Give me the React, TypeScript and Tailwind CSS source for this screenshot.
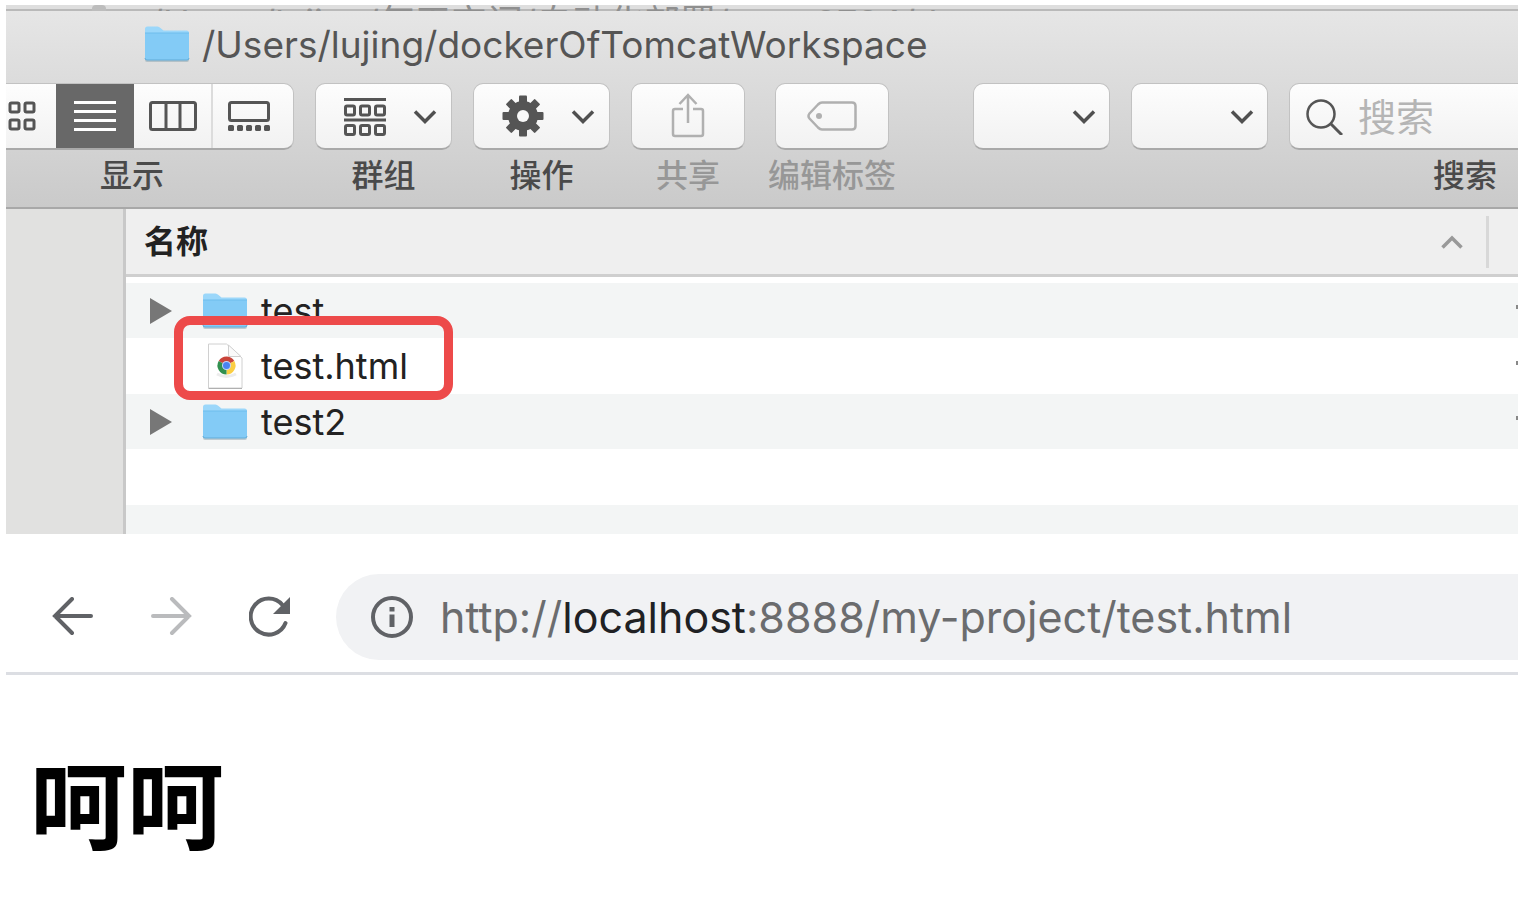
import type { ReactNode } from 'react';

const sans = "font-[Inter,'Noto_Sans_CJK_SC',sans-serif]";

const FolderIcon = () => (
  <svg className="h-[38px] w-[46px] shrink-0" viewBox="0 0 46 38" aria-hidden="true">
    <rect x="1" y="33" width="44" height="4" rx="2" fill="#8aa3b0" opacity=".5" />
    <path d="M1 4q0-2.500 2.500-2.500h10q1.500 0 3 1.500l3 2.500h23q2.500 0 2.500 2.500v5H1z" fill="#9bd7fa" />
    <path d="M1 8h44v25q0 2-2 2H3q-2 0-2-2z" fill="#83cbf6" />
    <path d="M1 8h44" stroke="#6fbdec" strokeWidth="1" />
    <path d="M1 33q0 2 2 2h40q2 0 2-2" fill="none" stroke="#5eabd9" strokeWidth="1" />
  </svg>
);

const ChromeFileIcon = () => (
  <svg className="h-[46px] w-[46px] shrink-0" viewBox="0 0 46 46" aria-hidden="true">
    <path d="M6.500 1h18L40 15v30H6.500z" fill="#fff" stroke="#d0d0d0" />
    <path d="M6.500 45.500H40" stroke="#b0b0b0" />
    <path d="M26.500 2v10q0 1.500 1.500 1.500h11z" fill="#fafafa" stroke="#cfcfcf" />
    <path d="M15 31q9 5 19 0" fill="none" stroke="#ececec" strokeWidth="3" />
    <circle cx="24.500" cy="22.500" r="9" fill="#fff" />
    <path d="M24.500 22.500L16.700 18a9 9 0 0 1 15.600 0z" fill="#c9443a" />
    <path d="M24.500 22.500L32.300 18a9 9 0 0 1-7.800 13.500z" fill="#fbce43" />
    <path d="M24.500 22.500V31.500A9 9 0 0 1 16.700 18z" fill="#31904f" />
    <circle cx="24.500" cy="22.500" r="4.500" fill="#c3d6fa" />
    <circle cx="24.500" cy="22.500" r="3.500" fill="#4a83f0" />
  </svg>
);

const Chevron = () => (
  <svg className="h-[16px] w-[24px]" viewBox="0 0 24 16" fill="none" stroke="#505050" strokeWidth="3.500" aria-hidden="true">
    <path d="M2 3.500l10 10 10-10" />
  </svg>
);

const GridIcon = () => (
  <svg className="h-[32px] w-[28px]" viewBox="0 0 28 32" fill="none" stroke="#555" strokeWidth="3" aria-hidden="true">
    {[2, 17].map((x) =>
      [3, 20].map((y) => <rect key={`${x}-${y}`} x={x} y={y} width="9" height="9" rx="1.500" />)
    )}
  </svg>
);

const ListIcon = () => (
  <svg className="h-[30px] w-[42px]" viewBox="0 0 42 30" stroke="#fff" strokeWidth="3" aria-hidden="true">
    <path d="M0 1.500h42M0 10.500h42M0 19.500h42M0 28.500h42" />
  </svg>
);

const ColumnsIcon = () => (
  <svg className="h-[30px] w-[48px]" viewBox="0 0 48 30" fill="none" stroke="#555" strokeWidth="3" aria-hidden="true">
    <rect x="1.500" y="1.500" width="45" height="27" rx="2" />
    <path d="M17 2v26M31 2v26" />
  </svg>
);

const GalleryIcon = () => (
  <svg className="h-[32px] w-[42px]" viewBox="0 0 42 32" fill="none" stroke="#555" strokeWidth="3" aria-hidden="true">
    <rect x="1.500" y="2.500" width="39" height="18" rx="2" />
    {[0, 9, 18, 27, 36].map((x) => (
      <rect key={x} x={x} y="25" width="6" height="6" rx="1.500" fill="#555" stroke="none" />
    ))}
  </svg>
);

const GroupIcon = () => (
  <svg className="h-[40px] w-[42px]" viewBox="0 0 42 40" fill="none" stroke="#555" strokeWidth="3" aria-hidden="true">
    <path d="M0 3.500h42M0 24h42" />
    {[1.5, 16.5, 31.5].map((x) =>
      [10, 29.5].map((y) => <rect key={`${x}-${y}`} x={x} y={y} width="9" height="9" rx="1.500" />)
    )}
  </svg>
);

const GearIcon = () => (
  <svg className="h-[42px] w-[42px]" viewBox="-21 -21 42 42" fill="#555" aria-hidden="true">
    {[0, 45, 90, 135].map((angle) => (
      <rect key={angle} x="-4" y="-20.500" width="8" height="41" rx="1" transform={`rotate(${angle})`} />
    ))}
    <circle r="15" />
    <circle r="6" fill="#f8f8f8" />
  </svg>
);

const ShareIcon = () => (
  <svg className="h-[46px] w-[34px]" viewBox="0 0 34 46" fill="none" stroke="#b0b0b0" strokeWidth="2.500" aria-hidden="true">
    <path d="M12 16H4q-2 0-2 2v23q0 2 2 2h26q2 0 2-2V18q0-2-2-2h-8M17 30V2M8.500 11L17 2l8.500 9" />
  </svg>
);

const TagIcon = () => (
  <svg className="h-[30px] w-[50px]" viewBox="0 0 50 30" fill="none" stroke="#b0b0b0" strokeWidth="2.500" aria-hidden="true">
    <path d="M15 1.500h30q3.500 0 3.500 3.500v20q0 3.500-3.500 3.500H15q-2 0-4-2l-8.500-9q-2-2.500 0-5l8.500-9q2-2 4-2z" />
    <circle cx="12" cy="15" r="3" fill="#b0b0b0" stroke="none" />
  </svg>
);

const buttonBase =
  'flex h-[67px] items-center rounded-[10px] border border-[#c2c2c2] border-b-2 border-b-[#a9a9a9] bg-linear-to-b from-[#fdfdfd] to-[#f2f2f2]';

type ToolProps = { label?: string; muted?: boolean; className?: string; children: ReactNode };

const Tool = ({ label, muted, className = '', children }: ToolProps) => (
  <div className="flex flex-col items-center">
    {children}
    <span
      className={`h-[52px] text-[32px] leading-[52px] font-medium whitespace-nowrap ${muted ? 'text-[#979797]' : 'text-[#4a4a4a]'} ${className}`}
    >
      {label}
    </span>
  </div>
);

const files = [
  { name: 'test', folder: true },
  { name: 'test.html', folder: false },
  { name: 'test2', folder: true },
];

const Finder = () => (
  <section className="relative overflow-hidden">
    {/* Sliver of the window behind */}
    <div className="flex h-[6px] items-start overflow-hidden bg-[linear-gradient(#dedede_4px,#b9b9b9_4px)] pl-[86px]">
      <span className="h-[6px] w-[14px] shrink-0 rounded-t-sm bg-[#bdbdbd]" />
      <span className="ml-[44px] text-[36px] leading-[36px] whitespace-nowrap text-[#8f8f8f]">
        /Users/lujing/每天空间/自动化部署/sou=8784/d
      </span>
    </div>

    <header className="h-[198px] border-b-2 border-[#a8a8a8] bg-linear-to-b from-[#e6e6e6] to-[#cacaca]">
      <h1 className="flex h-[72px] items-start pt-[14px] pl-[138px] text-[37px] leading-[40px] text-[#555]">
        <FolderIcon />
        <span className="ml-[12px] whitespace-nowrap">/Users/lujing/dockerOfTomcatWorkspace</span>
      </h1>

      <div className="flex items-start">
        <Tool label="显示" className="pr-[36px]">
          <div className="flex h-[67px] overflow-hidden rounded-r-[10px] border border-l-0 border-[#c2c2c2] border-b-2 border-b-[#a9a9a9] bg-linear-to-b from-[#fdfdfd] to-[#f2f2f2]">
            <button aria-label="图标" className="flex w-[50px] items-center pl-[2px]"><GridIcon /></button>
            <button aria-label="列表" className="flex w-[78px] items-center justify-center bg-[#686868]"><ListIcon /></button>
            <button aria-label="分栏" className="flex w-[79px] items-center justify-center border-r-2 border-[#dcdcdc]"><ColumnsIcon /></button>
            <button aria-label="画廊" className="flex w-[80px] items-center pl-[15px]"><GalleryIcon /></button>
          </div>
        </Tool>
        <div className="ml-[21px] flex gap-[21px]">
          <Tool label="群组">
            <button aria-label="群组" className={`${buttonBase} w-[137px] justify-between pr-[14px] pl-[28px]`}><GroupIcon /><Chevron /></button>
          </Tool>
          <Tool label="操作">
            <button aria-label="操作" className={`${buttonBase} w-[137px] justify-between pr-[14px] pl-[28px]`}><GearIcon /><Chevron /></button>
          </Tool>
          <Tool label="共享" muted>
            <button aria-label="共享" disabled className={`${buttonBase} w-[114px] justify-center`}><ShareIcon /></button>
          </Tool>
        </div>
        <div className="ml-[23px]">
          <Tool label="编辑标签" muted>
            <button aria-label="编辑标签" disabled className={`${buttonBase} w-[114px] justify-center`}><TagIcon /></button>
          </Tool>
        </div>
        <div className="ml-[77px] flex gap-[21px]">
          <Tool><button aria-label="菜单一" className={`${buttonBase} w-[137px] justify-end pr-[13px]`}><Chevron /></button></Tool>
          <Tool><button aria-label="菜单二" className={`${buttonBase} w-[137px] justify-end pr-[13px]`}><Chevron /></button></Tool>
        </div>
        <div className="ml-[21px] min-w-0 flex-1">
          <div className={`${buttonBase} rounded-r-none border-r-0 pl-[15px]`}>
            <svg className="h-[38px] w-[38px] shrink-0" viewBox="0 0 38 38" fill="none" stroke="#555" strokeWidth="2.500" aria-hidden="true">
              <circle cx="16" cy="17" r="13.500" />
              <path d="M25.500 26.500L37 38" strokeWidth="3" />
            </svg>
            <input
              id="finder-search"
              type="search"
              placeholder="搜索"
              className="ml-[15px] h-[64px] w-full min-w-0 bg-transparent pt-[2px] text-[38px] outline-none placeholder:text-[#b5b5b5]"
            />
          </div>
          <label htmlFor="finder-search" className="block pr-[21px] text-right text-[32px] leading-[52px] font-medium text-[#4a4a4a]">
            搜索
          </label>
        </div>
      </div>
    </header>

    <div className="flex h-[325px] overflow-hidden">
      <aside className="w-[120px] shrink-0 border-r-3 border-[#c8c8c8] bg-[#e1e1e0]" />
      <div className="min-w-0 flex-1">
        <table className="w-full table-fixed border-separate border-spacing-0 text-[36px] text-[#222]">
          <thead>
            <tr className="h-[68px] bg-[#efefef]">
              <th className="border-b-3 border-[#cfcfcf] p-0 text-left">
                <div className="flex items-center justify-between border-r-3 border-[#d8d8d8] pr-[23px] pl-[18px]">
                  <span className="text-[32px] leading-[52px] font-bold">名称</span>
                  <svg className="h-[14px] w-[22px]" viewBox="0 0 22 14" fill="none" stroke="#999" strokeWidth="3.500" aria-hidden="true">
                    <path d="M1.500 12.500L11 3l9.500 9.500" />
                  </svg>
                </div>
              </th>
              <th className="w-[29px] border-b-3 border-[#cfcfcf] p-0" />
            </tr>
            <tr className="h-[6px]"><td colSpan={2} className="p-0" /></tr>
          </thead>
          <tbody>
            {files.map((file) => (
              <tr key={file.name} className="h-[55px] odd:bg-[#f3f5f5] even:h-[56px]">
                <td className="p-0">
                  <div className="flex items-center pl-[24px]">
                    <svg className="h-[26px] w-[22px] shrink-0" viewBox="0 0 22 26" fill="#777" aria-hidden="true">
                      {file.folder && <path d="M0 0l22 13L0 26z" />}
                    </svg>
                    <span className="ml-[30px]">{file.folder ? <FolderIcon /> : <ChromeFileIcon />}</span>
                    <span className="ml-[13px] leading-[54px]">{file.name}</span>
                  </div>
                </td>
                <td className="p-0">
                  <span className="mb-[7px] ml-auto block h-[4px] w-[2px] bg-[#888]" />
                </td>
              </tr>
            ))}
            <tr className="h-[56px]"><td /><td /></tr>
            <tr className="h-[55px] bg-[#f3f5f5]"><td /><td /></tr>
          </tbody>
        </table>
      </div>
    </div>

    {/* Callout drawn over the file row */}
    <div className="pointer-events-none absolute top-[311px] left-[168px] h-[84px] w-[279px] rounded-[16px] border-9 border-[#ed4a4a]" />
  </section>
);

const Browser = () => (
  <section>
    <nav className="mt-[40px] flex h-[86px] items-center text-[#5f6368]">
      <button aria-label="后退" className="ml-[46px]">
        <svg className="h-[40px] w-[42px]" viewBox="0 0 42 40" fill="none" stroke="#606266" strokeWidth="4" strokeLinecap="round" aria-hidden="true">
          <path d="M39 19H3M20 2L3 19l17 17" />
        </svg>
      </button>
      <button aria-label="前进" disabled className="ml-[56px]">
        <svg className="h-[40px] w-[42px]" viewBox="0 0 42 40" fill="none" stroke="#babbbd" strokeWidth="4" strokeLinecap="round" aria-hidden="true">
          <path d="M3 19h36M22 2l17 17-17 17" />
        </svg>
      </button>
      <button aria-label="重新加载" className="ml-[57px]">
        <svg className="h-[42px] w-[42px]" viewBox="0 0 42 42" fill="none" stroke="#606266" strokeWidth="4" strokeLinecap="round" aria-hidden="true">
          <path d="M33.500 9A18 18 0 1 0 36.500 27" />
          <path d="M41 1v17H24z" fill="#606266" stroke="none" />
        </svg>
      </button>
      <div className="ml-[45px] flex h-full min-w-0 flex-1 items-center rounded-l-full bg-[#f1f2f4] pl-[35px]">
        <svg className="h-[42px] w-[42px] shrink-0" viewBox="0 0 42 42" aria-hidden="true">
          <circle cx="21" cy="21" r="19" fill="none" stroke="#606266" strokeWidth="4" />
          <path d="M18.500 11h5v4.500h-5zM18.500 18.500h5V31h-5z" fill="#606266" />
        </svg>
        <a href="http://localhost:8888/my-project/test.html" className="ml-[27px] text-[43px] whitespace-nowrap text-[#6b6c6e]">
          http://<span className="text-[#202124]">localhost</span>:8888/my-project/test.html
        </a>
      </div>
    </nav>
    <hr className="mt-[12px] border-t-3 border-[#dcdee3]" />
    <main className="px-[24px] pt-[60px]">
      <h2 className="text-[97px] leading-[144px] font-bold text-black">呵呵</h2>
    </main>
  </section>
);

const App = () => (
  <div className={`${sans} overflow-hidden bg-white pt-[5px] pr-[4px] pl-[6px]`}>
    <Finder />
    <Browser />
  </div>
);

export default App;
